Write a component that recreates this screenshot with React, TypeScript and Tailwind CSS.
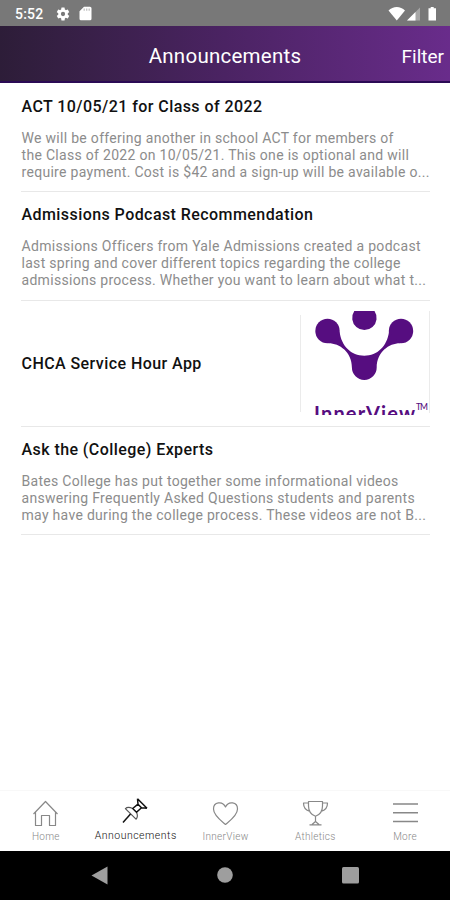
import React from 'react';

type Announcement = {
  title: string;
  lines?: string[];
};

const announcements: Announcement[] = [
  {
    title: 'ACT 10/05/21 for Class of 2022',
    lines: [
      'We will be offering another in school ACT for members of',
      'the Class of 2022 on 10/05/21. This one is optional and will',
      'require payment. Cost is $42 and a sign-up will be available o...',
    ],
  },
  {
    title: 'Admissions Podcast Recommendation',
    lines: [
      'Admissions Officers from Yale Admissions created a podcast',
      'last spring and cover different topics regarding the college',
      'admissions process. Whether you want to learn about what t...',
    ],
  },
  { title: 'CHCA Service Hour App' },
  {
    title: 'Ask the (College) Experts',
    lines: [
      'Bates College has put together some informational videos',
      'answering Frequently Asked Questions students and parents',
      'may have during the college process. These videos are not B...',
    ],
  },
];

const StatusBar: React.FC = () => (
  <div className="flex h-[26px] shrink-0 items-center bg-[#787878] pl-[15px] pr-[13px] pt-px text-white">
    <span className="text-[14px] font-medium leading-none tracking-[0.2px]">5:52</span>
    <svg className="ml-[12px]" width="16" height="16" viewBox="0 0 24 24" fill="currentColor">
      <path d="M19.14 12.94c.04-.3.06-.61.06-.94s-.02-.64-.07-.94l2.03-1.58a.5.5 0 0 0 .12-.61l-1.92-3.32a.49.49 0 0 0-.59-.22l-2.39.96a7 7 0 0 0-1.62-.94l-.36-2.54a.48.48 0 0 0-.48-.41h-3.84a.47.47 0 0 0-.47.41l-.36 2.54c-.59.24-1.13.57-1.62.94l-2.39-.96a.48.48 0 0 0-.59.22L2.74 8.87a.47.47 0 0 0 .12.61l2.03 1.58a6 6 0 0 0 0 1.88l-2.03 1.58a.5.5 0 0 0-.12.61l1.92 3.32c.12.22.37.29.59.22l2.39-.96c.5.38 1.03.7 1.62.94l.36 2.54c.05.24.24.41.48.41h3.84c.24 0 .44-.17.47-.41l.36-2.54a7 7 0 0 0 1.62-.94l2.39.96c.22.08.47 0 .59-.22l1.92-3.32a.47.47 0 0 0-.12-.61zM12 15.2a3.2 3.2 0 1 1 0-6.4 3.2 3.2 0 0 1 0 6.4" />
    </svg>
    <svg className="ml-[8px]" width="13" height="15" viewBox="0 0 13 15">
      <path d="M5 .8h6a1.5 1.5 0 0 1 1.5 1.5v10.4a1.5 1.5 0 0 1-1.5 1.5H2a1.5 1.5 0 0 1-1.5-1.5V5.3z" fill="#fff" />
      <path d="M5.2 2.4v2.4M7.7 2.4v2.4M10.2 2.4v2.4" stroke="#c4c4c4" strokeWidth="1.3" />
    </svg>
    <svg className="ml-auto" width="49" height="16" viewBox="0 0 49 16">
      <path d="M.5 4.6C5-.1 12.5-.1 17 4.6L8.8 14.5z" fill="#fff" />
      <path d="M32 1.5V14.5H19z" fill="#a6a6a6" />
      <path d="M27.5 6V14.5H19z" fill="#fff" />
      <path d="M40.5 2.2h2.2V1h3v1.2h2.3v12.3h-7.5z" fill="#fff" />
    </svg>
  </div>
);

const Header: React.FC = () => (
  <header className="grid h-[57px] shrink-0 grid-cols-[1fr_auto_1fr] items-center border-b-2 border-[#2b0a55] bg-linear-to-r from-[#2d1d38] via-[#4b2363] to-[#692c8b] pt-[5px] text-white">
    <span />
    <h1 className="text-[20.5px] leading-none tracking-[0.25px]">Announcements</h1>
    <button className="justify-self-end pr-[6px] text-[19px] leading-none">Filter</button>
  </header>
);

const InnerViewLogo: React.FC = () => (
  <svg className="mb-[2px] ml-auto block" width="130" height="104" viewBox="300 311 130 104">
    <path d="M300.5 315v97M429.5 311v102" stroke="#ebebeb" />
    <g fill="#560d80">
      <path d="M354.3 311h20.2a12.2 12.2 0 1 1-20.2 0z" />
      <circle cx="327.5" cy="331" r="12.2" />
      <circle cx="401" cy="331" r="12.2" />
      <path d="M339.6 332C341.5 346 351 355.7 364.3 355.7S387 346 389 332L400 343.2C389 343.2 376.700 352 376.700 367.600a12.400 12.400 0 0 1-24.800 0C351.900 352 339.600 343.200 328.500 343.200z" />
    </g>
    <text x="314" y="420.5" fill="#560d80" className="font-[Lato] text-[20px] font-bold" textLength="101">InnerView</text>
    <text x="416" y="410" fill="#560d80" className="font-[Lato] text-[8.5px] font-medium" textLength="12">TM</text>
  </svg>
);

const AnnouncementRow: React.FC<{ item: Announcement }> = ({ item }) => {
  if (!item.lines) {
    return (
      <li className="flex h-[126px] items-center border-b border-[#e8e8e8]">
        <h2 className="pl-[0.5px] pt-px text-[16px] font-medium leading-5 tracking-[0.43px] text-[#111]">{item.title}</h2>
        <InnerViewLogo />
      </li>
    );
  }

  return (
    <li className="h-[109px] border-b border-[#e8e8e8] pt-[13px] first:pt-[14px] last:h-[108px]">
      <h2 className="pl-[0.5px] text-[16px] font-medium leading-5 tracking-[0.43px] text-[#111]">{item.title}</h2>
      <div className="mt-[13px] pl-[0.5px] text-[14px] leading-[17px] tracking-[0.3px] text-[#8c8c8c]">
        {item.lines.map((line) => (
          <p key={line} className="whitespace-nowrap">{line}</p>
        ))}
      </div>
    </li>
  );
};

const tabs = [
  {
    label: 'Home',
    icon: <path d="M1.5 14 13.5 1.5 25.5 14M3.5 12v13.5h6v-10h8v10h6V12" />,
  },
  {
    label: 'Announcements',
    active: true,
    icon: (
      <>
        <path d="M10.7 10.5C7.5 8.9 4.5 9.5 3.4 10.6L14 21.2c1.6-1.5 1.8-4.1.5-6.9" stroke="#555" />
        <path d="M15.5.8 25 10.3M15.5.8 16 6.2 10.7 10.5l3.8 3.8L19.5 9.7l5.5.6M16 6.2l3.5 3.5" strokeWidth="1.5" />
        <path d="M8.5 16 1 24.5" strokeWidth="1.5" />
      </>
    ),
  },
  {
    label: 'InnerView',
    icon: <path d="M13.5 24.5C10 21.5 1.5 15.5 1.5 9c0-7 9-8.5 12-2 3-6.5 12-5 12 2 0 6.5-8.5 12.5-12 15.5z" />,
  },
  {
    label: 'Athletics',
    icon: <path d="M6.5 1.5h14v4.5c0 5.5-3.5 9-7 10.3C10 15 6.5 11.5 6.5 6zM6.5 3h-5c0 4.5 2.5 7.500 6.500 8.500M20.500 3h5c0 4.500-2.500 7.500-6.500 8.500M13.500 16.300v5.200l-3.500 3M13.500 21.500l3.500 3M7.500 24.800h12" />,
  },
  {
    label: 'More',
    icon: <path d="M1 4h25M1 12.8h25M1 21.5h25" strokeWidth="1.6" />,
  },
];

const TabBar: React.FC = () => (
  <nav className="grid h-[61px] shrink-0 grid-cols-5 border-t border-[#f8f8f8] bg-white pl-px">
    {tabs.map((tab) => (
      <button key={tab.label} className={tab.active ? 'flex flex-col items-center pt-[7px] text-[#111]' : 'flex flex-col items-center pt-[9px] text-[#888]'}>
        <svg width="27" height="27" viewBox="0 0 27 27" fill="none" stroke="currentColor" strokeWidth="1.2" strokeLinejoin="round">
          {tab.icon}
        </svg>
        <span className={tab.active ? 'mt-[5px] text-[10.5px] leading-3 font-light tracking-[0.5px]' : 'mt-[4px] text-[10px] leading-3 font-light tracking-[0.3px]'}>{tab.label}</span>
      </button>
    ))}
  </nav>
);

const App: React.FC = () => {
  return (
    <div className="flex h-[900px] w-[450px] flex-col overflow-hidden bg-white font-[Roboto,sans-serif]">
      <StatusBar />
      <Header />
      <ul className="flex-1 pl-[21px] pr-[20px]">
        {announcements.map((item) => (
          <AnnouncementRow key={item.title} item={item} />
        ))}
      </ul>
      <TabBar />
      <div className="flex h-[49px] shrink-0 items-center bg-black text-[#9e9e9e]">
        <svg width="450" height="49" viewBox="0 0 450 49" fill="currentColor">
          <path d="M91.5 24.5 107.5 15.5v18z" />
          <circle cx="225" cy="24" r="7.8" />
          <rect x="342" y="16" width="17" height="16.5" rx="1.5" />
        </svg>
      </div>
    </div>
  );
};

export default App;
